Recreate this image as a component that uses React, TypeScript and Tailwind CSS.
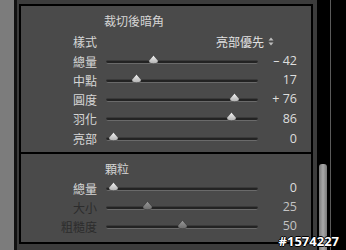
import React from 'react';

const cjk = { fontFamily: '"Noto Sans CJK TC", "Noto Sans", sans-serif' };
const latin = { fontFamily: '"Open Sans", "Liberation Sans", sans-serif' };

interface SliderRowProps {
    label: string;
    value: string;
    pos: number; // 0..1 along the usable track
    dim?: boolean;
    h: string;
}

const Thumb: React.FC<{ dim?: boolean }> = ({ dim }) => (
    <svg width="11" height="9" viewBox="0 0 11 9" className="block">
        <defs>
            <linearGradient id={dim ? 'tg-dim' : 'tg'} x1="0" y1="0" x2="0" y2="1">
                <stop offset="0" stopColor={dim ? '#9a9a9a' : '#f4f4f4'} />
                <stop offset="1" stopColor={dim ? '#6c6c6c' : '#b0b0b0'} />
            </linearGradient>
        </defs>
        <path d="M5.5 0.3 L10 5.4 Q10.6 8.7 5.5 8.7 Q0.4 8.7 1 5.4 Z" fill={`url(#${dim ? 'tg-dim' : 'tg'})`} stroke="#2a2a2a" strokeWidth="0.5" />
    </svg>
);

const SliderRow: React.FC<SliderRowProps> = ({ label, value, pos, dim, h }) => (
    <div className={`flex items-center ${h}`}>
        <div className={`w-[76px] text-right text-[12px] leading-none ${dim ? 'text-[#2c2c2c]' : 'text-[#d6d6d6]'}`} style={cjk}>{label}</div>
        <div className="ml-[9px] w-[152px] relative h-[4px]">
            <div className="h-[4px] rounded-full bg-[#232323] border-b border-[#6a6a6a] border-t border-t-[#3a3a3a]" />
            <div className="absolute -top-[5px]" style={{ left: 7 + pos * 138 - 5.5 }}>
                <Thumb dim={dim} />
            </div>
        </div>
        <div className={`w-[39px] text-right text-[12.5px] leading-none ${dim ? 'text-[#c4c4c4]' : 'text-[#dedede]'}`} style={latin}>{value}</div>
    </div>
);

export default function App() {
    return (
        <div className="w-[346px] h-[250px] flex overflow-hidden bg-black relative">
            <div className="w-[14px] bg-[#7c7c7c]" />
            <div className="w-[3px] bg-[#111]" />
            <div className="w-[300px] bg-[#3c3c3c] pt-[4px] pl-[2px] pr-[4px]">
                <div className="border-2 border-black bg-[#4a4a4a] h-[240px] flex flex-col">
                    <div className="border-b-2 border-black pt-[4px] h-[148px]">
                        <div className="h-[21px] flex items-center pl-[83px] text-[12px] text-[#d6d6d6]" style={cjk}>裁切後暗角</div>
                        <div className="h-[21px] flex items-center">
                            <div className="w-[76px] text-right text-[12px] text-[#d6d6d6]" style={cjk}>樣式</div>
                            <div className="ml-[9px] w-[168px] flex justify-end items-center gap-[4px]">
                                <span className="text-[12px] text-[#e2e2e2]" style={cjk}>亮部優先</span>
                                <svg width="6" height="9" viewBox="0 0 6 9">
                                    <path d="M3 0.5 L5.5 3.5 L0.5 3.5 Z" fill="#bdbdbd" />
                                    <path d="M3 8.5 L5.5 5.5 L0.5 5.5 Z" fill="#bdbdbd" />
                                </svg>
                            </div>
                        </div>
                        <SliderRow label="總量" value="– 42" pos={0.29} h="h-[19px]" />
                        <SliderRow label="中點" value="17" pos={0.17} h="h-[19px]" />
                        <SliderRow label="圓度" value="+ 76" pos={0.88} h="h-[19px]" />
                        <SliderRow label="羽化" value="86" pos={0.86} h="h-[20px]" />
                        <SliderRow label="亮部" value="0" pos={0} h="h-[20px]" />
                    </div>
                    <div className="pt-[5px] flex-1">
                        <div className="h-[20px] flex items-center pl-[84px] text-[12px] text-[#d6d6d6]" style={cjk}>顆粒</div>
                        <SliderRow label="總量" value="0" pos={0} h="h-[19px]" />
                        <SliderRow label="大小" value="25" pos={0.25} dim h="h-[19px]" />
                        <SliderRow label="粗糙度" value="50" pos={0.5} dim h="h-[19px]" />
                    </div>
                </div>
            </div>
            <div className="flex-1 bg-black flex">
                <div className="ml-[2px] w-[8px] mt-[164px] rounded-t-[3px] bg-gradient-to-r from-[#7a7a7a] via-[#a8a8a8] to-[#7a7a7a]" />
                <div className="ml-[3px] w-[1px] bg-[#5a5a5a]" />
            </div>
            <div
                className="absolute right-[7px] bottom-[2px] text-[13px] leading-none font-bold text-white"
                style={{ ...latin, textShadow: '1px 0 0 #000, -1px 0 0 #000, 0 1px 0 #000, 0 -1px 0 #000' }}
            >
                #1574227
            </div>
        </div>
    );
}
